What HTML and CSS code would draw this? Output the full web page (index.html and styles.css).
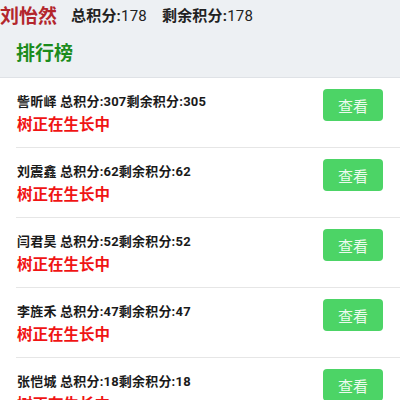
FILE: index.html
```html
<!DOCTYPE html>
<html lang="zh-CN">

<head>
    <meta charset="UTF-8">
    <meta name="viewport" content="width=device-width, initial-scale=1.0">
    <title>排行榜</title>
    <link rel="stylesheet" href="styles.css">
</head>

<body>
    <div id="header">
        <div class="user">
            <span class="user-name">刘怡然</span>
            <span class="score"><b>总积分:</b>178</span>
            <span class="score"><b>剩余积分:</b>178</span>
        </div>
        <div class="title">排行榜</div>
    </div>
    <div id="list">
        <div class="row">
            <div class="info">
                <div class="line">訾昕峄 总积分:307剩余积分:305</div>
                <div class="state">树正在生长中</div>
            </div>
            <button class="view">查看</button>
        </div>
        <div class="row">
            <div class="info">
                <div class="line">刘震鑫 总积分:62剩余积分:62</div>
                <div class="state">树正在生长中</div>
            </div>
            <button class="view">查看</button>
        </div>
        <div class="row">
            <div class="info">
                <div class="line">闫君昊 总积分:52剩余积分:52</div>
                <div class="state">树正在生长中</div>
            </div>
            <button class="view">查看</button>
        </div>
        <div class="row">
            <div class="info">
                <div class="line">李旌禾 总积分:47剩余积分:47</div>
                <div class="state">树正在生长中</div>
            </div>
            <button class="view">查看</button>
        </div>
        <div class="row">
            <div class="info">
                <div class="line">张恺城 总积分:18剩余积分:18</div>
                <div class="state">树正在生长中</div>
            </div>
            <button class="view">查看</button>
        </div>
    </div>
</body>

</html>
```

FILE: styles.css
```css
body {
    margin: 0;
    background: #ffffff;
    font-family: Roboto, "Noto Sans CJK SC", sans-serif;
    overflow: hidden;
}

#header {
    height: 77px;
    background: #edf0f3;
    border-bottom: 1px solid #dfe2e6;
}

.user {
    display: flex;
    align-items: center;
    height: 29px;
    font-size: 15px;
    color: #222222;
}

.user-name {
    font-size: 19px;
    font-weight: bold;
    color: #b3262c;
    margin-right: 14px;
}

.score {
    margin-right: 15px;
    letter-spacing: 0.2px;
}

.title {
    padding: 13px 16px 0;
    font-size: 19px;
    font-weight: bold;
    color: #1c8c1c;
    line-height: 24px;
}

.row {
    display: flex;
    justify-content: space-between;
    align-items: flex-start;
    height: 69px;
    margin-left: 16px;
    padding: 0 17px 0 1px;
    border-bottom: 1px solid #e6e6e6;
}

.info {
    padding-top: 15px;
}

.line {
    font-size: 13px;
    font-weight: bold;
    line-height: 18px;
    letter-spacing: 0.2px;
    color: #1a1a1a;
}

.state {
    margin-top: 3px;
    font-size: 15.5px;
    font-weight: bold;
    line-height: 22px;
    color: #f01414;
}

.view {
    margin-top: 11px;
    width: 60px;
    height: 32px;
    border: none;
    border-radius: 4px;
    background: #4cd466;
    color: rgba(255, 255, 255, 0.92);
    font-family: "Noto Sans CJK SC", sans-serif;
    font-size: 15px;
    font-weight: normal;
}
```
